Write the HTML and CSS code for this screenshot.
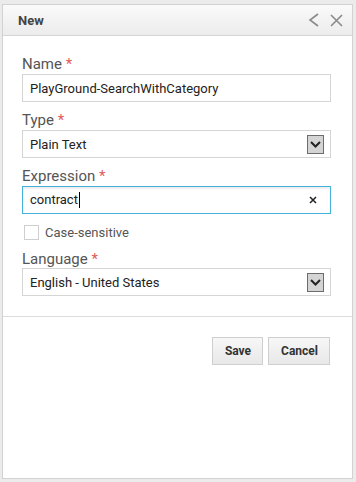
FILE: index.html
```html
<!DOCTYPE html>
<html lang="en">
<head>
<meta charset="UTF-8" />
<meta name="viewport" content="width=device-width, initial-scale=1.0"/>
<title>New</title>
<link rel="stylesheet" href="styles.css">
</head>
<body>

<!-- Dialog panel -->
<div class="panel">
  <div class="panel-header">
    <span class="panel-title">New</span>
    <div class="panel-tools">
      <svg width="12" height="14" viewBox="0 0 12 14"><path d="M10 1 L2 7 L10 13" fill="none" stroke="#8a8a8a" stroke-width="1.6"/></svg>
      <svg width="13" height="13" viewBox="0 0 13 13"><path d="M1 1 L12 12 M12 1 L1 12" fill="none" stroke="#8a8a8a" stroke-width="1.6"/></svg>
    </div>
  </div>

  <div class="panel-body">
    <div class="field">
      <div class="label">Name <span class="req">*</span></div>
      <div class="input">PlayGround-SearchWithCategory</div>
    </div>
    <div class="field">
      <div class="label">Type <span class="req">*</span></div>
      <div class="input select">
        <span>Plain Text</span>
        <span class="arrow"><svg width="11" height="7" viewBox="0 0 11 7"><path d="M1 1 L5.5 5.5 L10 1" fill="none" stroke="#222" stroke-width="2"/></svg></span>
      </div>
    </div>
    <div class="field">
      <div class="label">Expression <span class="req">*</span></div>
      <div class="input focused">
        <span>contract<span class="caret"></span></span>
        <svg class="clear" width="8" height="8" viewBox="0 0 8 8"><path d="M1 1 L7 7 M7 1 L1 7" fill="none" stroke="#222" stroke-width="1.5"/></svg>
      </div>
    </div>
    <label class="check">
      <span class="box"></span>
      Case-sensitive
    </label>
    <div class="field lang">
      <div class="label">Language <span class="req">*</span></div>
      <div class="input select">
        <span>English - United States</span>
        <span class="arrow"><svg width="11" height="7" viewBox="0 0 11 7"><path d="M1 1 L5.5 5.5 L10 1" fill="none" stroke="#222" stroke-width="2"/></svg></span>
      </div>
    </div>
  </div>

  <div class="panel-footer">
    <button class="btn">Save</button>
    <button class="btn">Cancel</button>
  </div>
</div>

</body>
</html>
```

FILE: styles.css
```css
body {
  margin: 0;
  padding: 4px 3px 4px 2px;
  background: #ebebeb;
  font-family: Roboto, "Liberation Sans", Arial, sans-serif;
}

.panel {
  width: 351px;
  height: 475px;
  box-sizing: border-box;
  background: #fff;
  border: 1px solid #d2d2d2;
}

.panel-header {
  display: flex;
  justify-content: space-between;
  align-items: center;
  height: 30px;
  padding: 0 9px 0 15px;
  background: linear-gradient(to bottom, #fafafa, #ececec);
  border-bottom: 1px solid #d6d6d6;
}
.panel-title {
  font-size: 13px;
  font-weight: bold;
  color: #444;
}
.panel-tools {
  display: flex;
  align-items: center;
  gap: 10px;
}
.panel-tools svg {
  display: block;
}

.panel-body {
  padding: 19px 21px 0 19px;
}

.field {
  margin-bottom: 9px;
}
.label {
  font-size: 15px;
  line-height: 18px;
  color: #555;
  margin-bottom: 1px;
}
.req {
  color: #e05a5a;
}

.input {
  display: flex;
  align-items: center;
  justify-content: space-between;
  height: 28px;
  box-sizing: border-box;
  padding: 0 7px 0 7px;
  border: 1px solid #d5d5d5;
  font-size: 13px;
  color: #222;
}
.input.focused {
  border-color: #45b1dc;
  box-shadow: inset 0 2px 2px rgba(0, 0, 0, 0.07);
}
.caret {
  display: inline-block;
  width: 1px;
  height: 16px;
  margin-left: 1px;
  background: #000;
  vertical-align: -4px;
}
.clear {
  margin-right: 6px;
}

.select {
  padding-right: 6px;
}
.arrow {
  display: flex;
  align-items: center;
  justify-content: center;
  width: 17px;
  height: 19px;
  box-sizing: border-box;
  background: #d4d4d4;
  border: 1px solid #6c6c6c;
}

/* Checkbox row */
.check {
  display: flex;
  align-items: center;
  gap: 6px;
  margin: 11px 0 10px 2px;
  font-size: 13px;
  color: #555;
}
.box {
  width: 15px;
  height: 15px;
  box-sizing: border-box;
  border: 1px solid #cfcfcf;
  background: #fff;
}

.lang {
  margin-bottom: 0;
}
.lang .label {
  margin-bottom: 0;
}

.panel-footer {
  display: flex;
  justify-content: flex-end;
  gap: 5px;
  margin-top: 20px;
  padding: 20px 22px 0 0;
  border-top: 1px solid #dcdcdc;
}
.btn {
  height: 28px;
  padding: 0 11px 0 12px;
  border: 1px solid #cfcfcf;
  background: linear-gradient(to bottom, #f7f7f7, #e8e8e8);
  font-family: Roboto, "Liberation Sans", Arial, sans-serif;
  font-size: 12px;
  font-weight: bold;
  color: #333;
}
```
